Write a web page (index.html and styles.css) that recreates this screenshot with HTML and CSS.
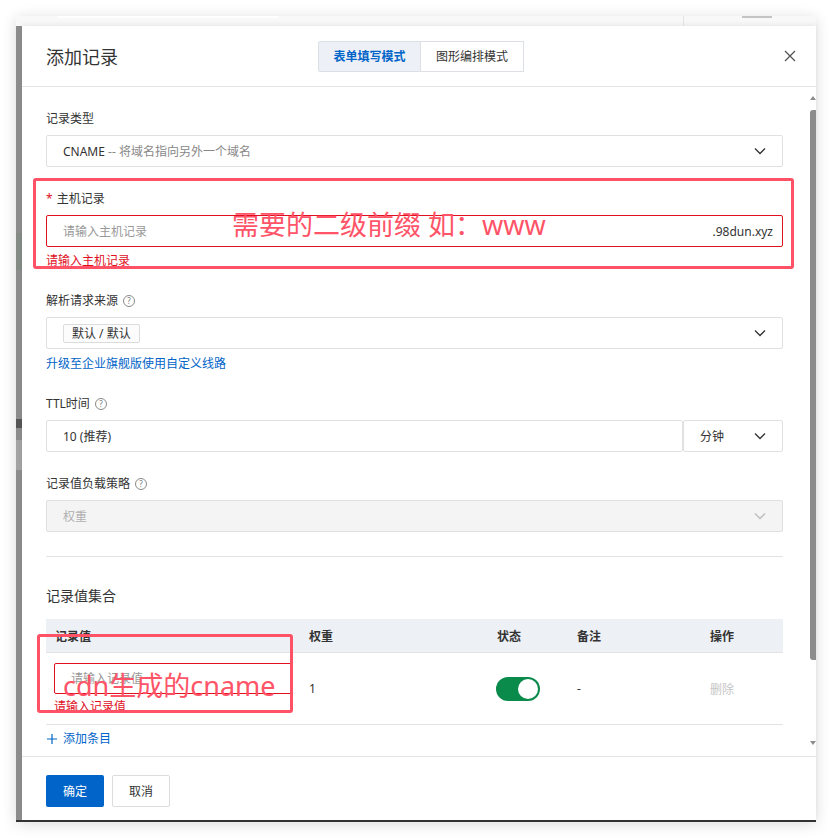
FILE: index.html
```html
<!DOCTYPE html>
<html lang="zh-CN">
<head>
    <meta charset="UTF-8">
    <meta name="viewport" content="width=device-width, initial-scale=1.0">
    <title>添加记录</title>
    <link rel="stylesheet" href="styles.css">
</head>
<body>
    <div class="shot">
        <!-- page behind the dialog, mostly covered -->
        <div class="app-strip">
            <span class="strip-field"></span>
            <span class="strip-divider"></span>
            <span class="strip-text"></span>
        </div>

        <div class="shot-main">
            <div class="side-rail">
                <span class="rail-band"></span>
                <span class="rail-mark"></span>
                <span class="rail-light"></span>
            </div>

            <div class="dialog">
                <div class="dialog-header">
                    <h2 class="dialog-title">添加记录</h2>
                    <div class="mode-tabs">
                        <button class="mode-tab active">表单填写模式</button>
                        <button class="mode-tab">图形编排模式</button>
                    </div>
                    <span class="dialog-close">
                        <svg width="12" height="12" viewBox="0 0 12 12"><path d="M1 1l10 10M11 1L1 11" stroke="#555" stroke-width="1.3" fill="none"/></svg>
                    </span>
                </div>

                <div class="dialog-body">
                    <div class="form">
                        <div class="field">
                            <div class="field-label">记录类型</div>
                            <div class="control">
                                <span>CNAME <span class="muted">-- 将域名指向另外一个域名</span></span>
                                <svg class="chevron" width="12" height="8" viewBox="0 0 12 8"><path d="M1 1.5l5 5 5-5" fill="none" stroke="#333" stroke-width="1.3"/></svg>
                            </div>
                        </div>

                        <div class="field">
                            <div class="field-label"><span class="required">*</span>主机记录</div>
                            <div class="control invalid host-control">
                                <input class="control-input" type="text" placeholder="请输入主机记录">
                                <span class="suffix">.98dun.xyz</span>
                            </div>
                            <div class="field-error">请输入主机记录</div>
                        </div>

                        <div class="field">
                            <div class="field-label">解析请求来源 <span class="help">?</span></div>
                            <div class="control">
                                <span class="tag">默认 / 默认</span>
                                <svg class="chevron" width="12" height="8" viewBox="0 0 12 8"><path d="M1 1.5l5 5 5-5" fill="none" stroke="#333" stroke-width="1.3"/></svg>
                            </div>
                            <a class="field-link" href="#">升级至企业旗舰版使用自定义线路</a>
                        </div>

                        <div class="field">
                            <div class="field-label">TTL时间 <span class="help">?</span></div>
                            <div class="ttl-control">
                                <div class="control ttl-value">10 (推荐)</div>
                                <div class="control ttl-unit">
                                    <span>分钟</span>
                                    <svg class="chevron" width="12" height="8" viewBox="0 0 12 8"><path d="M1 1.5l5 5 5-5" fill="none" stroke="#333" stroke-width="1.3"/></svg>
                                </div>
                            </div>
                        </div>

                        <div class="field">
                            <div class="field-label">记录值负载策略 <span class="help">?</span></div>
                            <div class="control disabled">
                                <span>权重</span>
                                <svg class="chevron" width="12" height="8" viewBox="0 0 12 8"><path d="M1 1.5l5 5 5-5" fill="none" stroke="#bbb" stroke-width="1.3"/></svg>
                            </div>
                        </div>

                        <div class="divider"></div>

                        <h3 class="section-title">记录值集合</h3>

                        <div class="records">
                            <div class="records-row records-head">
                                <div class="cell">记录值</div>
                                <div class="cell">权重</div>
                                <div class="cell">状态</div>
                                <div class="cell">备注</div>
                                <div class="cell">操作</div>
                            </div>
                            <div class="records-row">
                                <div class="cell value-cell">
                                    <div class="control invalid value-control">
                                        <input class="control-input" type="text" placeholder="请输入记录值">
                                    </div>
                                    <div class="field-error">请输入记录值</div>
                                </div>
                                <div class="cell">1</div>
                                <div class="cell switch-cell"><span class="switch on"></span></div>
                                <div class="cell">-</div>
                                <div class="cell action-off">删除</div>
                            </div>
                        </div>

                        <a class="add-row" href="#">
                            <svg width="10" height="10" viewBox="0 0 10 10"><path d="M5 0v10M0 5h10" stroke="#0064c8" stroke-width="1.2"/></svg>
                            添加条目
                        </a>
                    </div>

                    <div class="scrollbar">
                        <span class="scroll-arrow up"></span>
                        <span class="scroll-thumb"></span>
                        <span class="scroll-arrow down"></span>
                    </div>
                </div>

                <div class="dialog-footer">
                    <button class="btn btn-primary">确定</button>
                    <button class="btn btn-default">取消</button>
                </div>
            </div>
        </div>

        <!-- red hand-drawn notes on top of the screenshot -->
        <div class="note-box note-host"></div>
        <div class="note-text note-host-text">需要的二级前缀 如：www</div>
        <div class="note-box note-value"></div>
        <div class="note-text note-value-text">cdn生成的cname</div>
    </div>
</body>
</html>
```

FILE: styles.css
```css
* {
    box-sizing: border-box;
}
body {
    margin: 0;
    background: #fff;
    font-family: "Noto Sans", "Noto Sans CJK SC", sans-serif;
    font-size: 12px;
    color: #333;
}
.shot {
    position: relative;
    margin: 16px;
    width: 800px;
    height: 806px;
    display: flex;
    flex-direction: column;
    background: #fff;
    border-bottom: 2px solid #333;
    box-shadow: 0 2px 14px rgba(0,0,0,0.14);
}

/* background page strip */
.app-strip {
    height: 10px;
    display: flex;
    background: #f8f8f8;
}
.strip-field {
    margin-left: 42px;
    width: 220px;
    height: 2px;
    background: #fff;
}
.strip-divider {
    margin-left: 405px;
    width: 1px;
    background: #e4e4e4;
}
.strip-text {
    margin-left: 58px;
    width: 30px;
    height: 2px;
    background: #c4c4c4;
}
.shot-main {
    flex: 1;
    display: flex;
    min-height: 0;
}
.side-rail {
    width: 6px;
    background: #8c8c8c;
    display: flex;
    flex-direction: column;
}
.rail-band {
    margin-top: 207px;
    height: 37px;
    background: #838b84;
}
.rail-mark {
    margin-top: 149px;
    height: 9px;
    background: #555;
}
.rail-light {
    margin-top: 12px;
    height: 30px;
    background: #a3a3a3;
}

/* dialog */
.dialog {
    flex: 1;
    display: flex;
    flex-direction: column;
    background: #fff;
    box-shadow: 0 -2px 4px rgba(0,0,0,0.06);
}
.dialog-header {
    height: 61px;
    border-bottom: 1px solid #e5e5e5;
    display: grid;
    grid-template-columns: 1fr auto 1fr;
    align-items: center;
    padding: 0 20px 0 24px;
}
.dialog-title {
    margin: 0;
    font-size: 18px;
    font-weight: normal;
    color: #333;
}
.mode-tabs {
    display: flex;
}
.mode-tab {
    width: 103px;
    height: 31px;
    border: 1px solid #dcdfe4;
    background: #fff;
    font-family: inherit;
    font-size: 12px;
    color: #333;
    padding: 0;
}
.mode-tab + .mode-tab {
    border-left: none;
}
.mode-tab.active {
    background: #edf1f7;
    color: #0064c8;
    font-weight: 600;
    border-radius: 2px 0 0 2px;
}
.dialog-close {
    justify-self: end;
    display: flex;
}
.dialog-body {
    height: 669px;
    display: flex;
    overflow: hidden;
}
.form {
    flex: 1;
    padding: 24px 27px 0 24px;
}
.scrollbar {
    width: 6px;
    display: flex;
    flex-direction: column;
    align-items: flex-end;
    padding: 9px 0 11px;
}
.scroll-arrow {
    width: 0;
    height: 0;
    border-left: 3px solid transparent;
    border-right: 3px solid transparent;
}
.scroll-arrow.up {
    border-bottom: 4px solid #8c8c8c;
}
.scroll-arrow.down {
    margin-top: auto;
    border-top: 4px solid #8c8c8c;
}
.scroll-thumb {
    margin-top: 10px;
    width: 6px;
    height: 550px;
    background: #8c8c8c;
    border-radius: 3px 0 0 3px;
}

/* form */
.field {
    margin-bottom: 24px;
}
.field-label {
    display: flex;
    align-items: center;
    gap: 5px;
    line-height: 16px;
    margin-bottom: 8px;
}
.required {
    color: #e0101e;
    margin-right: -1px;
}
.help {
    width: 12px;
    height: 12px;
    border: 1px solid #8a8a8a;
    border-radius: 50%;
    font-size: 8px;
    line-height: 10px;
    text-align: center;
    color: #777;
}
.control {
    height: 32px;
    border: 1px solid #e0e0e0;
    border-radius: 2px;
    display: flex;
    align-items: center;
    padding: 0 16px;
    background: #fff;
}
.control .chevron {
    margin-left: auto;
}
.control.invalid {
    border-color: #e0101e;
}
.control.disabled {
    background: #f4f4f4;
    color: #b0b0b0;
}
.control-input {
    flex: 1;
    min-width: 0;
    border: none;
    outline: none;
    background: transparent;
    font-family: inherit;
    font-size: 12px;
    color: #333;
    padding: 0;
}
.control-input::placeholder {
    color: #999;
}
.host-control {
    padding-right: 9px;
}
.muted {
    color: #888;
}
.tag {
    height: 19px;
    padding: 0 8px;
    border: 1px solid #dcdcdc;
    border-radius: 2px;
    line-height: 17px;
    background: #fcfcfc;
}
.field-error {
    color: #e0101e;
    line-height: 16px;
    margin-top: 6px;
}
.field-link {
    display: block;
    margin-top: 7px;
    line-height: 16px;
    color: #0064c8;
    text-decoration: none;
}
.ttl-control {
    display: flex;
}
.ttl-value {
    flex: 1;
}
.ttl-unit {
    width: 100px;
}
.divider {
    height: 1px;
    background: #e3e3e3;
}
.section-title {
    margin: 29px 0 13px;
    font-size: 14px;
    font-weight: normal;
    line-height: 20px;
}

/* records table */
.records-row {
    display: grid;
    grid-template-columns: 254px 188px 80px 133px 82px;
    height: 72px;
    align-items: center;
    border-bottom: 1px solid #e3e3e3;
}
.records-head {
    height: 34px;
    background: #edf0f5;
    font-weight: 600;
}
.cell {
    padding: 0 9px;
}
.value-cell {
    padding-left: 8px;
    padding-right: 0;
}
.value-control {
    width: 239px;
    height: 31px;
}
.value-cell .field-error {
    margin-top: 5px;
}
.switch-cell {
    padding-left: 8px;
    display: flex;
}
.switch {
    width: 44px;
    height: 24px;
    border-radius: 12px;
    background: #ccc;
    position: relative;
}
.switch.on {
    background: #0b8b4b;
}
.switch::after {
    content: "";
    position: absolute;
    top: 2px;
    left: 2px;
    width: 20px;
    height: 20px;
    border-radius: 50%;
    background: #fff;
}
.switch.on::after {
    left: 22px;
}
.action-off {
    color: #c6c6c6;
}
.add-row {
    display: flex;
    align-items: center;
    gap: 6px;
    margin-top: 6px;
    line-height: 16px;
    color: #0064c8;
    text-decoration: none;
    padding-left: 1px;
}

/* footer */
.dialog-footer {
    flex: 1;
    border-top: 1px solid #e5e5e5;
    padding: 18px 24px 0;
    display: flex;
    align-items: flex-start;
    gap: 8px;
}
.btn {
    width: 58px;
    height: 32px;
    font-family: inherit;
    font-size: 12px;
    border-radius: 2px;
    padding: 0;
}
.btn-primary {
    background: #0064c8;
    color: #fff;
    border: none;
}
.btn-default {
    background: #fff;
    color: #333;
    border: 1px solid #dcdcdc;
}

/* annotations */
.note-box {
    position: absolute;
    border: 3px solid #ff5267;
    border-radius: 3px;
}
.note-host {
    left: 17px;
    top: 162px;
    width: 761px;
    height: 91px;
}
.note-value {
    left: 21px;
    top: 618px;
    width: 256px;
    height: 79px;
}
.note-text {
    position: absolute;
    font-family: "Noto Sans", "Noto Sans CJK SC", sans-serif;
    font-size: 27px;
    line-height: 32px;
    color: #ff5468;
    white-space: nowrap;
}
.note-host-text {
    left: 216px;
    top: 193px;
}
.note-value-text {
    left: 47px;
    top: 654px;
}
```
